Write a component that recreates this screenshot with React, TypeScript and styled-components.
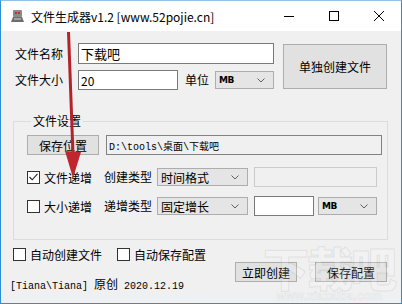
import styled, { createGlobalStyle } from 'styled-components';

const GlobalStyle = createGlobalStyle`
    html, body {
        margin: 0;
        padding: 0;
        background: #ffffff;
    }
    * {
        box-sizing: border-box;
    }
`;

const UI_FONT = `"Noto Sans CJK SC", "Noto Sans", sans-serif`;
const MONO_FONT = `"Liberation Mono", "Noto Sans CJK SC", monospace`;

const Window = styled.div`
    position: relative;
    width: 402px;
    height: 304px;
    border: 1px solid #2f8fd6;
    border-top-color: #8fc1e8;
    background: #f0f0f0;
    font-family: ${UI_FONT};
    font-size: 12px;
    color: #000;
    overflow: hidden;
`;

const TitleBar = styled.div`
    height: 30px;
    background: #ffffff;
    display: flex;
    align-items: center;
    padding-left: 9px;
`;

const Title = styled.span`
    margin-left: 6px;
    font-size: 12px;
    color: #000;
    flex: 1;
`;

const Controls = styled.div`
    display: flex;
    height: 30px;
`;

const ControlButton = styled.div`
    width: 45px;
    height: 30px;
    display: flex;
    align-items: center;
    justify-content: center;
`;

const Client = styled.div`
    display: flex;
    flex-direction: column;
`;

const TopSection = styled.div`
    display: flex;
    margin-top: 12px;
    padding-left: 14px;
`;

const Fields = styled.div`
    display: flex;
    flex-direction: column;
    gap: 6px;
`;

const Row = styled.div`
    display: flex;
    align-items: center;
`;

const Label = styled.span<{ $w?: number; $ml?: number }>`
    width: ${p => (p.$w ? `${p.$w}px` : 'auto')};
    margin-left: ${p => p.$ml ?? 0}px;
    white-space: nowrap;
    line-height: 16px;
`;

const TextBox = styled.div<{ $w: number; $h?: number; $disabled?: boolean; $mono?: boolean; $ml?: number; $fs?: number }>`
    width: ${p => p.$w}px;
    height: ${p => p.$h ?? 20}px;
    margin-left: ${p => p.$ml ?? 0}px;
    background: ${p => (p.$disabled ? '#f0f0f0' : '#ffffff')};
    border: 1px solid ${p => (p.$disabled ? '#cccccc' : '#7a7a7a')};
    display: flex;
    align-items: center;
    padding-left: 2px;
    font-family: ${p => (p.$mono ? MONO_FONT : UI_FONT)};
    font-size: ${p => (p.$mono ? 10 : p.$fs ?? 13)}px;
    white-space: nowrap;
    overflow: hidden;
`;

const PathBox = styled(TextBox)`
    background: #f0f0f0;
    border-color: #828282;
    font-size: 10px;
`;

const Select = styled.div<{ $w: number; $ml?: number }>`
    width: ${p => p.$w}px;
    height: 18px;
    margin-left: ${p => p.$ml ?? 0}px;
    background: #e5e5e5;
    border: 1px solid #adadad;
    display: flex;
    align-items: center;
    justify-content: space-between;
    padding: 0 8px 0 3px;
    font-size: 12px;
    white-space: nowrap;
`;

const SmallCaps = styled.span`
    font-family: "DejaVu Sans", sans-serif;
    font-size: 9px;
    font-weight: bold;
    letter-spacing: -0.5px;
`;

const Button = styled.div<{ $w: number; $h?: number; $ml?: number }>`
    width: ${p => p.$w}px;
    height: ${p => p.$h ?? 20}px;
    margin-left: ${p => p.$ml ?? 0}px;
    background: #e1e1e1;
    border: 1px solid #adadad;
    display: flex;
    align-items: center;
    justify-content: center;
    font-size: 12px;
    white-space: nowrap;
`;

const BigButton = styled(Button)`
    margin-top: 1px;
`;

const Group = styled.fieldset`
    margin: 23px 0 0 12px;
    width: 375px;
    height: 127px;
    border: 1px solid #dcdcdc;
    padding: 6px 0 0 13px;
    display: flex;
    flex-direction: column;
    min-inline-size: 0;
`;

const Legend = styled.legend`
    padding: 0 2px;
    margin-left: 4px;
    font-size: 12px;
    line-height: 16px;
`;

const GroupRow = styled.div<{ $mt?: number }>`
    display: flex;
    align-items: center;
    margin-top: ${p => p.$mt ?? 0}px;
    height: 20px;
`;

const CheckLabel = styled.label<{ $w?: number; $ml?: number }>`
    display: flex;
    align-items: center;
    width: ${p => (p.$w ? `${p.$w}px` : 'auto')};
    margin-left: ${p => p.$ml ?? 0}px;
    white-space: nowrap;
    gap: 4px;
`;

const Box = styled.span`
    width: 13px;
    height: 13px;
    background: #fff;
    border: 1px solid #333333;
    display: inline-flex;
    align-items: center;
    justify-content: center;
`;

const BottomChecks = styled.div`
    display: flex;
    align-items: center;
    margin: 7px 0 0 12px;
    height: 14px;
`;

const Footer = styled.div`
    display: flex;
    align-items: flex-start;
    margin-top: 1px;
    padding-left: 9px;
`;

const Credit = styled.span`
    margin-top: 16px;
    font-family: ${MONO_FONT};
    font-size: 10px;
    line-height: 12px;
    flex: 1;
    white-space: nowrap;
`;

const CreditCn = styled.span`
    font-family: ${UI_FONT};
    font-size: 12px;
`;

const FooterButtons = styled.div`
    display: flex;
    gap: 18px;
    margin-right: 14px;
`;

const Overlay = styled.svg`
    position: absolute;
    left: 0;
    top: 0;
    pointer-events: none;
`;

const Watermark = styled.div`
    position: absolute;
    right: 6px;
    bottom: 1px;
    display: flex;
    flex-direction: column;
    align-items: center;
    pointer-events: none;
    opacity: 0.6;
`;

const WatermarkBig = styled.span`
    font-family: "Noto Sans CJK SC", sans-serif;
    font-weight: 900;
    font-size: 46px;
    line-height: 48px;
    color: rgba(255, 255, 255, 0.3);
    -webkit-text-stroke: 1px rgba(150, 150, 150, 0.3);
    letter-spacing: -2px;
`;

const WatermarkUrl = styled.span`
    font-family: "Liberation Sans", sans-serif;
    font-size: 12px;
    font-weight: bold;
    line-height: 12px;
    color: rgba(255, 255, 255, 0.3);
    -webkit-text-stroke: 0.5px rgba(150, 150, 150, 0.3);
`;

const Chevron = () => (
    <svg width="8" height="5" viewBox="0 0 8 5">
        <polyline points="0.5,0.5 4,4 7.5,0.5" fill="none" stroke="#606060" strokeWidth="1" />
    </svg>
);

const Check = ({ checked }: { checked?: boolean }) => (
    <Box>
        {checked && (
            <svg width="9" height="8" viewBox="0 0 9 8">
                <polyline points="0.5,4 3.2,6.8 8.5,0.8" fill="none" stroke="#222" strokeWidth="1.1" />
            </svg>
        )}
    </Box>
);

const AppIcon = () => (
    <svg width="15" height="14" viewBox="0 0 15 14">
        <rect x="3" y="1" width="9" height="7" rx="1" fill="#8a8a8a" />
        <rect x="5" y="3" width="2" height="2" fill="#c03030" />
        <rect x="8" y="3" width="2" height="2" fill="#c03030" />
        <path d="M1 13 L3 8 L12 8 L14 13 Z" fill="#6d6d6d" />
        <rect x="4" y="9" width="7" height="2" fill="#a0a0a0" />
    </svg>
);

export default function App() {
    return (
        <>
            <GlobalStyle />
            <Window>
                <TitleBar>
                    <AppIcon />
                    <Title>文件生成器v1.2 [www.52pojie.cn]</Title>
                    <Controls>
                        <ControlButton>
                            <svg width="10" height="10" viewBox="0 0 10 10">
                                <line x1="0" y1="5.5" x2="10" y2="5.5" stroke="#000" strokeWidth="1" />
                            </svg>
                        </ControlButton>
                        <ControlButton>
                            <svg width="10" height="10" viewBox="0 0 10 10">
                                <rect x="0.5" y="0.5" width="9" height="9" fill="none" stroke="#000" strokeWidth="1" />
                            </svg>
                        </ControlButton>
                        <ControlButton>
                            <svg width="10" height="10" viewBox="0 0 10 10">
                                <path d="M0 0 L10 10 M10 0 L0 10" stroke="#000" strokeWidth="1" />
                            </svg>
                        </ControlButton>
                    </Controls>
                </TitleBar>

                <Client>
                    <TopSection>
                        <Fields>
                            <Row>
                                <Label $w={63}>文件名称</Label>
                                <TextBox $w={196} $h={21}>下载吧</TextBox>
                            </Row>
                            <Row>
                                <Label $w={63}>文件大小</Label>
                                <TextBox $w={100} $fs={12}>20</TextBox>
                                <Label $w={30} $ml={7}>单位</Label>
                                <Select $w={59}>
                                    <SmallCaps>MB</SmallCaps>
                                    <Chevron />
                                </Select>
                            </Row>
                        </Fields>
                        <BigButton $w={104} $h={45} $ml={9}>单独创建文件</BigButton>
                    </TopSection>

                    <Group>
                        <Legend>文件设置</Legend>
                        <GroupRow>
                            <Button $w={72}>保存位置</Button>
                            <PathBox $w={276} $ml={7} $mono>D:\tools\桌面\下载吧</PathBox>
                        </GroupRow>
                        <GroupRow $mt={12}>
                            <CheckLabel $w={77}>
                                <Check checked />
                                文件递增
                            </CheckLabel>
                            <Label $w={53}>创建类型</Label>
                            <Select $w={91}>
                                时间格式
                                <Chevron />
                            </Select>
                            <TextBox $w={123} $ml={6} $disabled />
                        </GroupRow>
                        <GroupRow $mt={9}>
                            <CheckLabel $w={77}>
                                <Check />
                                大小递增
                            </CheckLabel>
                            <Label $w={53}>递增类型</Label>
                            <Select $w={91}>
                                固定增长
                                <Chevron />
                            </Select>
                            <TextBox $w={60} $ml={6} />
                            <Select $w={59} $ml={4}>
                                <SmallCaps>MB</SmallCaps>
                                <Chevron />
                            </Select>
                        </GroupRow>
                    </Group>

                    <BottomChecks>
                        <CheckLabel $w={104}>
                            <Check />
                            自动创建文件
                        </CheckLabel>
                        <CheckLabel>
                            <Check />
                            自动保存配置
                        </CheckLabel>
                    </BottomChecks>

                    <Footer>
                        <Credit>
                            [Tiana\Tiana] <CreditCn>原创</CreditCn> 2020.12.19
                        </Credit>
                        <FooterButtons>
                            <Button $w={62}>立即创建</Button>
                            <Button $w={72}>保存配置</Button>
                        </FooterButtons>
                    </Footer>
                </Client>

                <Watermark>
                    <WatermarkBig>下载吧</WatermarkBig>
                    <WatermarkUrl>www.xiazaiba.com</WatermarkUrl>
                </Watermark>

                <Overlay width="402" height="304" viewBox="0 0 402 304">
                    <path d="M66 31 L69 31 L73.5 154 L70.5 154 Z" fill="#b3232c" />
                    <polygon points="64,150 80,151 72,177" fill="#c0262e" />
                </Overlay>
            </Window>
        </>
    );
}
